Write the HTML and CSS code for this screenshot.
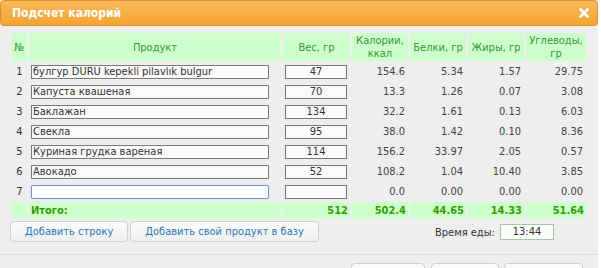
FILE: index.html
```html
<!DOCTYPE html>
<html lang="ru">

<head>
    <meta charset="UTF-8" />
    <title>Подсчет калорий</title>
    <link rel="stylesheet" href="styles.css">
</head>

<body>
    <div class="dialog">
        <div class="titlebar">
            <span class="title">Подсчет калорий</span>
            <svg class="close" width="10" height="10" viewBox="0 0 10 10">
                <path d="M1.5 1.5 L8.5 8.5 M8.5 1.5 L1.5 8.5" stroke="#fff" stroke-width="2.6" stroke-linecap="square" />
            </svg>
        </div>

        <div class="content">
            <table class="calc">
                <colgroup>
                    <col class="c-num" />
                    <col class="c-name" />
                    <col class="c-weight" />
                    <col class="c-val" />
                    <col class="c-val" />
                    <col class="c-val" />
                    <col class="c-carb" />
                </colgroup>
                <thead>
                    <tr>
                        <th>№</th>
                        <th>Продукт</th>
                        <th>Вес, гр</th>
                        <th>Калории,<br />ккал</th>
                        <th>Белки, гр</th>
                        <th>Жиры, гр</th>
                        <th>Углеводы,<br />гр</th>
                    </tr>
                </thead>
                <tbody id="rows"></tbody>
                <tfoot>
                    <tr>
                        <td></td>
                        <td class="total-label">Итого:</td>
                        <td>512</td>
                        <td>502.4</td>
                        <td>44.65</td>
                        <td>14.33</td>
                        <td>51.64</td>
                    </tr>
                </tfoot>
            </table>

            <div class="actions">
                <button class="btn">Добавить строку</button>
                <button class="btn">Добавить свой продукт в базу</button>
                <label class="meal-time">Время еды: <input type="text" value="13:44" /></label>
            </div>
        </div>

        <div class="footer">
            <button class="btn btn-foot w1"></button>
            <button class="btn btn-foot w2"></button>
            <button class="btn btn-foot w3"></button>
        </div>
    </div>

    <script>
        const items = [
            { name: "булгур DURU kepekli pilavlık bulgur", weight: 47, kcal: 154.6, prot: 5.34, fat: 1.57, carb: 29.75 },
            { name: "Капуста квашеная", weight: 70, kcal: 13.3, prot: 1.26, fat: 0.07, carb: 3.08 },
            { name: "Баклажан", weight: 134, kcal: 32.2, prot: 1.61, fat: 0.13, carb: 6.03 },
            { name: "Свекла", weight: 95, kcal: 38.0, prot: 1.42, fat: 0.10, carb: 8.36 },
            { name: "Куриная грудка вареная", weight: 114, kcal: 156.2, prot: 33.97, fat: 2.05, carb: 0.57 },
            { name: "Авокадо", weight: 52, kcal: 108.2, prot: 1.04, fat: 10.40, carb: 3.85 },
            { name: "", weight: "", kcal: 0, prot: 0, fat: 0, carb: 0 }
        ];

        const rows = document.getElementById("rows");

        items.forEach((item, i) => {
            const focus = item.name === "" ? " focused" : "";
            rows.innerHTML += `
          <tr>
            <td class="num">${i + 1}</td>
            <td><input type="text" class="name${focus}" value="${item.name}" /></td>
            <td><input type="text" class="weight" value="${item.weight}" /></td>
            <td class="val">${item.kcal.toFixed(1)}</td>
            <td class="val">${item.prot.toFixed(2)}</td>
            <td class="val">${item.fat.toFixed(2)}</td>
            <td class="val">${item.carb.toFixed(2)}</td>
          </tr>
        `;
        });
    </script>
</body>

</html>
```

FILE: styles.css
```css
body {
    margin: 0;
    background: #ffffff;
    font-family: "DejaVu Sans", Verdana, sans-serif;
    font-stretch: condensed;
    font-size: 11px;
    color: #333;
}

.dialog {
    width: 598px;
    background: #eeeeee;
}

.titlebar {
    height: 24px;
    display: flex;
    align-items: center;
    justify-content: space-between;
    padding: 0 8px 0 11px;
    background: linear-gradient(#f8b95a, #f3a534);
    border: 1px solid #e38f22;
    border-radius: 4px;
}

.title {
    color: #fff;
    font-weight: bold;
    font-size: 12px;
}

.close {
    display: block;
    cursor: pointer;
}

.content {
    padding: 6px 10px 0 10px;
}

.calc {
    border-spacing: 2px 1px;
    table-layout: fixed;
    width: 578px;
}

.c-num { width: 15px; }
.c-name { width: 252px; }
.c-weight { width: 67px; }
.c-val { width: 56px; }
.c-carb { width: 60px; }

.calc th {
    background: #ccffcc;
    color: #339933;
    font-weight: normal;
    height: 28px;
    padding: 0;
    line-height: 13px;
}

.calc td {
    height: 19px;
    padding: 0 2px;
    white-space: nowrap;
}

.calc td.num {
    text-align: center;
    padding: 0;
}

.calc td.val {
    text-align: right;
    padding-right: 3px;
    color: #444;
}

.calc input {
    box-sizing: border-box;
    height: 14px;
    margin: 0;
    padding: 0 1px;
    border: 1px solid #7a7a7a;
    background: #fafafa;
    font: inherit;
    color: #333;
}

.calc input.name {
    width: 238px;
}

.calc input.weight {
    width: 62px;
    text-align: center;
}

.calc input.focused {
    border-color: #6f93d3;
    border-radius: 2px;
    box-shadow: 0 0 1px #8fade2;
    background: #fbfbfb;
}

.calc tfoot td {
    background: #ccffcc;
    color: #33a000;
    font-weight: bold;
    text-align: right;
    height: 16px;
    padding-right: 2px;
}

.calc tfoot td.total-label {
    text-align: left;
}

.actions {
    display: flex;
    align-items: center;
    gap: 2px;
    margin-top: 2px;
}

.btn {
    height: 21px;
    padding: 0 14px;
    border: 1px solid #cfcfcf;
    border-radius: 4px;
    background: linear-gradient(#fbfbfb, #efefef);
    color: #2a79b5;
    font: inherit;
    cursor: pointer;
}

.meal-time {
    margin-left: auto;
    margin-right: 34px;
    color: #333;
}

.meal-time input {
    box-sizing: border-box;
    width: 54px;
    height: 16px;
    margin-left: 2px;
    border: 1px solid #a8c9a8;
    background: #fdfdfd;
    font: inherit;
    color: #333;
    text-align: center;
}

.footer {
    margin-top: 12px;
    border-top: 1px solid #dcdcdc;
    padding: 8px 15px 8px 0;
    display: flex;
    justify-content: flex-end;
    gap: 5px;
}

.btn-foot {
    height: 24px;
    padding: 0;
}

.btn-foot.w1 { width: 74px; margin-right: 1px; }
.btn-foot.w2 { width: 68px; }
.btn-foot.w3 { width: 79px; }
```
